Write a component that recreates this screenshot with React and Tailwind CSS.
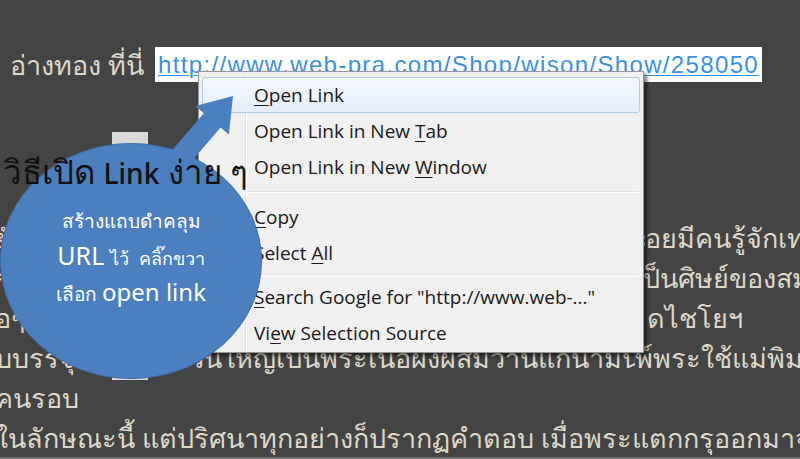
import React from 'react'

const thai = { fontFamily: '"Noto Sans", "DejaVu Sans", sans-serif' }

const menuItems = [
  { pre: '', key: 'O', post: 'pen Link', active: true },
  { pre: 'Open Link in New ', key: 'T', post: 'ab' },
  { pre: 'Open Link in New ', key: 'W', post: 'indow' },
  { sep: true, h: 'h-[14px]' },
  { pre: '', key: 'C', post: 'opy' },
  { pre: 'Select ', key: 'A', post: 'll' },
  { sep: true, h: 'h-[8px]' },
  { pre: '', key: 'S', post: 'earch Google for "http://www.web-..."' },
  { pre: 'Vi', key: 'e', post: 'w Selection Source' },
]

const ContextMenu = () => (
  <div className="absolute left-[198px] top-[71px] z-10 h-[282px] w-[446px] border border-[#979797] bg-[#f0f0f0] pt-[5px] shadow-[3px_3px_4px_rgba(0,0,0,0.55)]">
    <div className="absolute left-[46px] top-0 h-full w-[2px] border-l border-[#e2e3e3] bg-white" />
    {menuItems.map((item, i) =>
      item.sep ? (
        <div key={i} className={`relative flex items-center pl-[49px] pr-[4px] ${item.h}`}>
          <div className="h-[2px] w-full border-t border-[#e0e0e0] bg-white" />
        </div>
      ) : (
        <div
          key={i}
          className={`relative mx-[3px] flex h-[36px] items-center rounded-[3px] pl-[51px] text-[19px] text-[#1a1a1a] ${
            item.active ? 'border border-[#aeccf0] bg-gradient-to-b from-[#f5f9fe] to-[#e4edf9]' : 'border border-transparent'
          }`}
          style={{ fontFamily: '"Open Sans", "Noto Sans", sans-serif' }}
        >
          <span>
            {item.pre}
            <span className="underline underline-offset-[3px]">{item.key}</span>
            {item.post}
          </span>
        </div>
      )
    )}
  </div>
)

const Callout = () => (
  <>
    <div className="absolute left-[112px] top-[132px] h-[248px] w-[36px] bg-[#d9d9d9]" />
    <div className="absolute left-0 top-[143px] z-20 flex h-[236px] w-[262px] flex-col items-center justify-center rounded-[50%] border border-[#3f6ea8] bg-[#4b7fbf] pb-[8px] text-white" style={thai}>
      <div className="text-[19px] leading-[34px]">สร้างแถบดำคลุม</div>
      <div className="flex items-baseline gap-[6px] leading-[34px]">
        <span className="text-[25px]">URL</span>
        <span className="text-[18px]">ไว้&nbsp;&nbsp;คลิ๊กขวา</span>
      </div>
      <div className="flex items-baseline gap-[5px] leading-[34px]">
        <span className="text-[19px]">เลือก</span>
        <span className="text-[24px]">open link</span>
      </div>
    </div>
    <svg className="absolute left-0 top-0 z-20" width="300" height="200" viewBox="0 0 300 200">
      <g transform="translate(168 172) rotate(-49.5)" fill="#4b7fbf">
        <polygon points="0,-11 68,-11 68,-22 100,0 68,22 68,11 0,11" />
      </g>
    </svg>
  </>
)

const App = () => {
  return (
    <div className="relative h-[459px] w-[800px] overflow-hidden border-b-2 border-[#707070] bg-[#444444] text-[#ddd7c9]" style={thai}>
      <div className="flex items-center pl-[10px] pt-[47px]">
        <span className="w-[145px] shrink-0 whitespace-nowrap text-[27px] leading-[35px]">อ่างทอง ที่นี่</span>
        <div className="flex h-[35px] w-[607px] items-center bg-white pl-[3px]">
          <span
            className="whitespace-nowrap text-[24px] tracking-[1.35px] text-[#3b90e8] underline decoration-1 underline-offset-[2px]"
            style={{ fontFamily: '"Liberation Sans", Arial, sans-serif' }}
          >
            http://www.web-pra.com/Shop/wison/Show/258050
          </span>
        </div>
      </div>

      <div className="relative z-30 mt-[70px] whitespace-nowrap pl-[3px] font-medium leading-[40px] text-[#111]">
        <span className="text-[33px]">วิธีเปิด </span>
        <span className="text-[28px]">Link</span>
        <span className="text-[33px]"> ง่าย ๆ</span>
      </div>

      <div className="-ml-[5px] mt-[20px] text-[27px] leading-[40px]">
        <div className="flex h-[40px] overflow-hidden whitespace-nowrap">
          <span className="w-[650px] shrink-0 overflow-hidden">ยังมีพระเครื่องอีกหลายพิมพ์ที่ยังไม่เป็นที่แพร่หลาย เพราะมีจำนวนน้</span>
          <span>อยมีคนรู้จักเท่านั้น</span>
        </div>
        <div className="flex h-[40px] overflow-hidden whitespace-nowrap">
          <span className="w-[648px] shrink-0 overflow-hidden">กล่าวกันว่าผู้สร้างพระชุดนี้เ</span>
          <span>ป็นศิษย์ของสมเด็จ</span>
        </div>
        <div className="flex h-[40px] overflow-hidden whitespace-nowrap">
          <span className="w-[652px] shrink-0 overflow-hidden">อๆ ได้สร้างพระเลียนแบบพระกรุวั</span>
          <span>ดไชโยฯ</span>
        </div>
        <div className="flex h-[40px] overflow-hidden whitespace-nowrap">
          <span className="w-[640px] shrink-0 overflow-hidden">บบรรจุไว้ในกรุ ส่วนใหญ่เป็นพระเนื้อผงผสมว่านแก่นามัน การพิม</span>
          <span>พ์พระใช้แม่พิมพ์</span>
        </div>
        <div className="h-[40px] overflow-hidden whitespace-nowrap">คนรอบ</div>
        <div className="h-[40px] overflow-hidden whitespace-nowrap">
          ในลักษณะนี้ แต่ปริศนาทุกอย่างก็ปรากฏคำตอบ เมื่อพระแตกกรุออกมาจากวัด
        </div>
      </div>

      <ContextMenu />
      <Callout />
    </div>
  )
}

export default App
